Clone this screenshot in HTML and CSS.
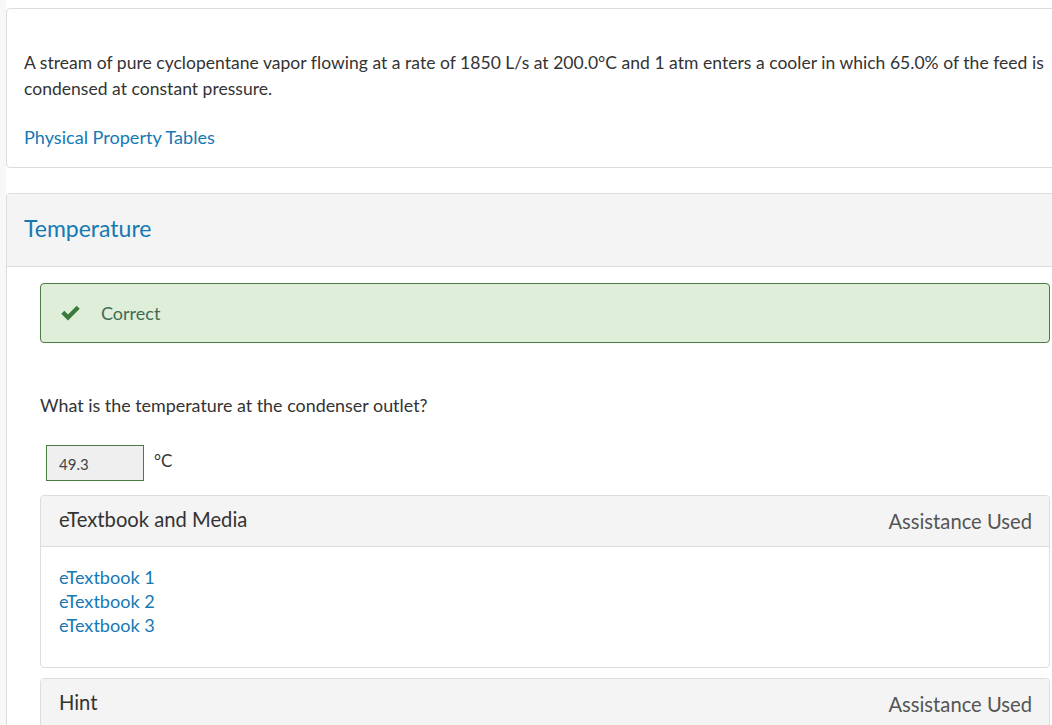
FILE: index.html
```html
<!DOCTYPE html>
<html>
<head>
<meta charset="utf-8">
<link rel="stylesheet" href="styles.css">
</head>
<body>
<div class="page">
  <div class="strip"></div>
  <div class="main">
    <div class="card intro">
      <p class="stem">A stream of pure cyclopentane vapor flowing at a rate of 1850 L/s at 200.0°C and 1 atm enters a cooler in which 65.0% of the feed is condensed at constant pressure.</p>
      <a class="link tables" href="#">Physical Property Tables</a>
    </div>
    <div class="part">
      <div class="part-head"><h2 class="part-title">Temperature</h2></div>
      <div class="part-body">
        <div class="alert">
          <svg class="check" width="21" height="17" viewBox="0 0 20 16"><path d="M1.2 8.2 L4.1 5.4 L7.6 8.9 L15.9 0.6 L18.8 3.5 L7.6 14.7 Z" fill="#3b7a3d"/></svg>
          <span class="alert-text">Correct</span>
        </div>
        <p class="question">What is the temperature at the condenser outlet?</p>
        <div class="answer">
          <div class="input">49.3</div>
          <span class="unit">°C</span>
        </div>
        <div class="panel">
          <div class="panel-head">
            <span class="panel-title">eTextbook and Media</span>
            <span class="panel-note">Assistance Used</span>
          </div>
          <div class="panel-body">
            <a class="link" href="#">eTextbook 1</a>
            <a class="link" href="#">eTextbook 2</a>
            <a class="link" href="#">eTextbook 3</a>
          </div>
        </div>
        <div class="panel">
          <div class="panel-head">
            <span class="panel-title">Hint</span>
            <span class="panel-note">Assistance Used</span>
          </div>
        </div>
      </div>
    </div>
  </div>
</div>
</body>
</html>
```
FILE: styles.css
```css
html, body {
  margin: 0;
  padding: 0;
  background: #fff;
  overflow: hidden;
}
body {
  font-family: Lato, "Open Sans", sans-serif;
  color: #333;
  width: 1052px;
  height: 725px;
}
.page {
  display: flex;
  height: 725px;
}
.strip {
  width: 6px;
  flex: none;
  background: #f8f8f8;
}
.main {
  width: 1090px;
  flex: none;
  padding-top: 8px;
}
.link {
  color: #1579b3;
  text-decoration: none;
  display: block;
}
.card {
  border: 1px solid #ddd;
  border-radius: 4px;
  background: #fff;
}
.intro {
  padding: 41px 17px 17px 17px;
}
.stem {
  margin: 0 0 22px 0;
  font-size: 17.5px;
  letter-spacing: 0.03px;
  line-height: 26px;
  width: 1040px;
}
.tables {
  font-size: 18.1px;
  line-height: 26px;
}
.part {
  margin-top: 25px;
  border-left: 1px solid #ddd;
  border-top: 1px solid #ddd;
  border-top-left-radius: 4px;
}
.part-head {
  background: #f4f4f4;
  border-bottom: 1px solid #ddd;
  height: 73px;
  box-sizing: border-box;
  display: flex;
  align-items: center;
  padding-left: 17px;
  padding-bottom: 4px;
}
.part-title {
  margin: 0;
  font-weight: normal;
  font-size: 23px;
  color: #1579b3;
}
.part-body {
  padding: 16px 0 0 33px;
  width: 1011px;
  box-sizing: content-box;
}
.alert {
  height: 58px;
  border: 1px solid #4a7c44;
  border-radius: 4px;
  background: #dfeed8;
  display: flex;
  align-items: center;
  padding-left: 19px;
  width: 989px;
}
.check {
  display: block;
}
.alert-text {
  margin-left: 20px;
  font-size: 18px;
  color: #3f6b55;
  padding-bottom: 1px;
}
.question {
  margin: 50px 0 0 0;
  font-size: 17.9px;
  line-height: 24px;
}
.answer {
  display: flex;
  align-items: flex-start;
  margin-top: 28px;
  margin-left: 6px;
}
.input {
  width: 84px;
  height: 34px;
  border: 1px solid #4a7c44;
  background: #efefef;
  font-size: 15px;
  line-height: 36px;
  padding-left: 12px;
  color: #444;
}
.unit {
  margin-left: 10px;
  font-size: 17px;
  line-height: 32px;
}
.panel {
  border: 1px solid #ddd;
  border-radius: 4px;
  width: 1008px;
  overflow: hidden;
}
.answer + .panel {
  margin-top: 14px;
}
.panel + .panel {
  margin-top: 10px;
}
.panel-head {
  background: #f4f4f4;
  height: 50px;
  display: flex;
  align-items: center;
  justify-content: space-between;
  padding: 0 17px 0 18px;
}
.panel-title {
  font-size: 20.2px;
  margin-top: -4px;
}
.panel-note {
  font-size: 20.2px;
  color: #555;
  margin-top: 0;
}
.panel-body {
  border-top: 1px solid #ddd;
  padding: 18px 18px 30px 18px;
  font-size: 18.1px;
  line-height: 24px;
}
```
